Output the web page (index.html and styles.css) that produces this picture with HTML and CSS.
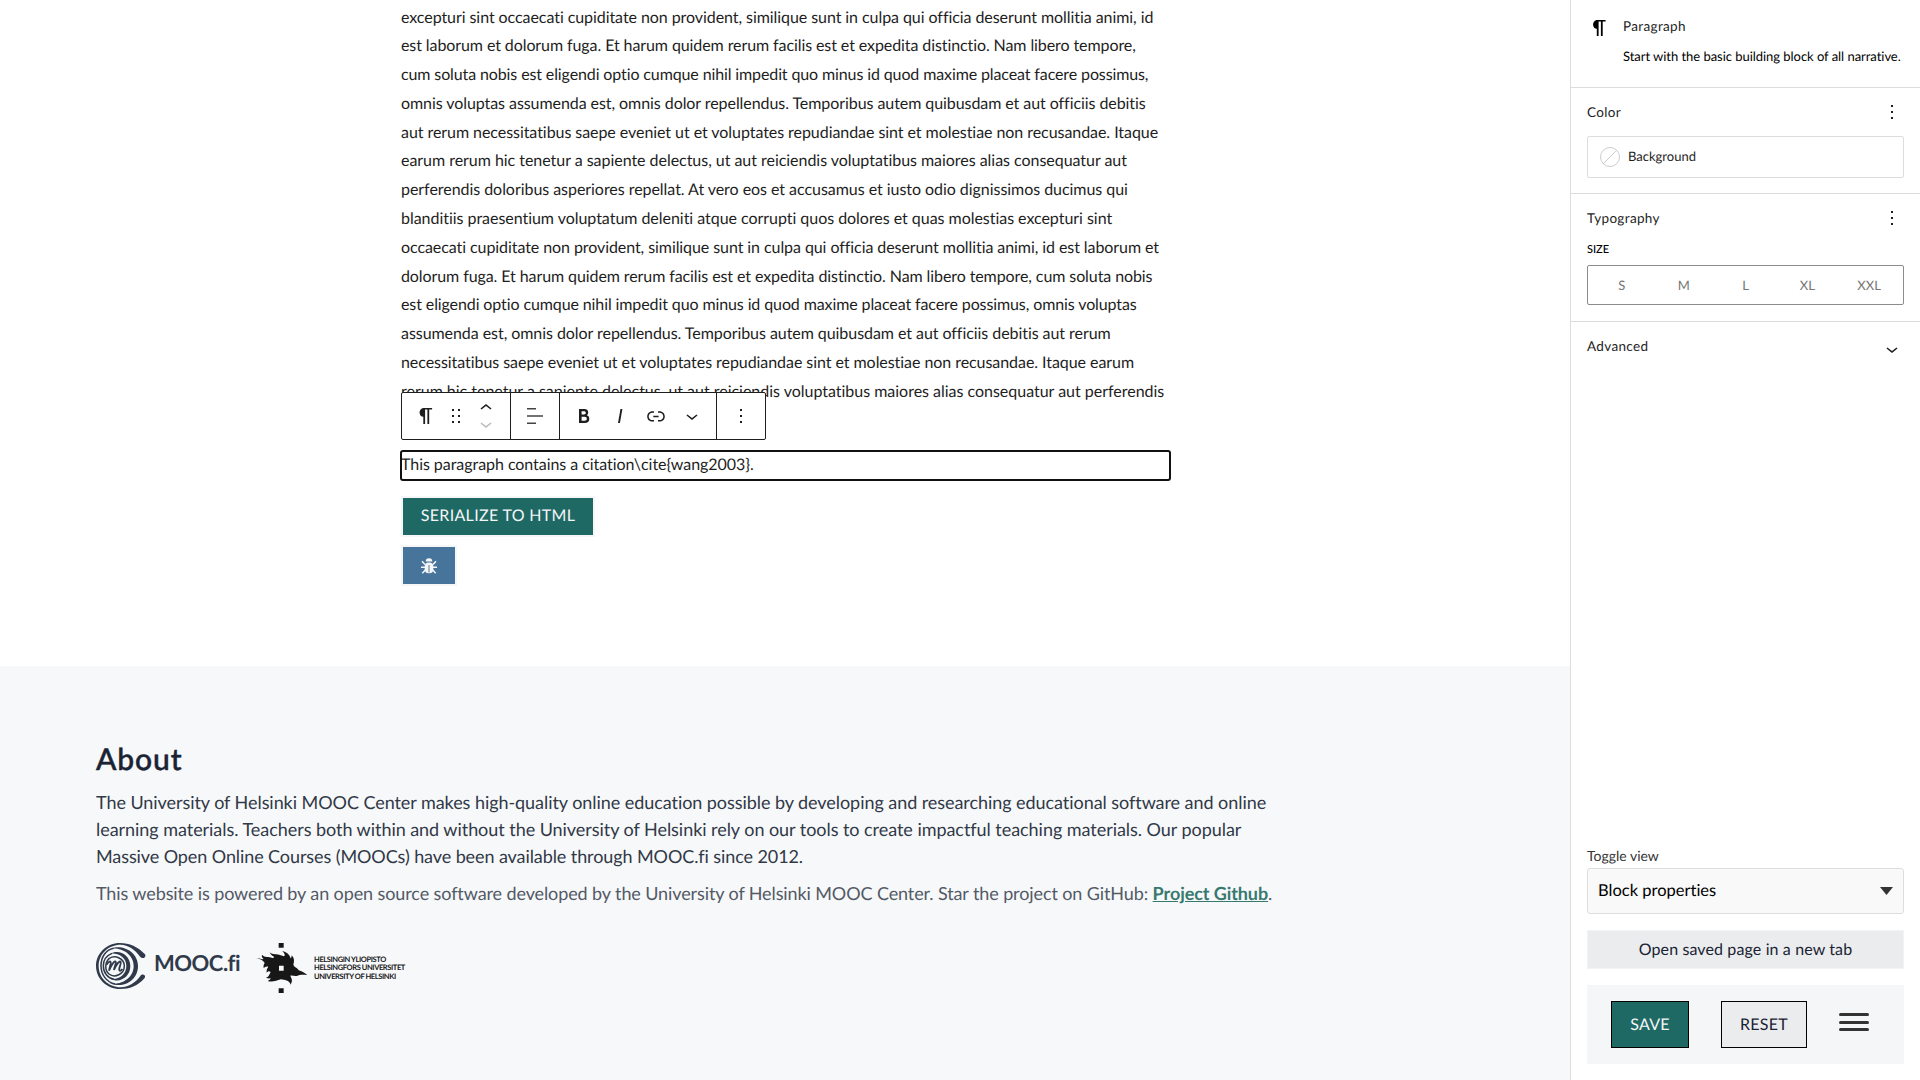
FILE: index.html
```html
<!DOCTYPE html>
<html lang="en">
<head>
<meta charset="utf-8">
<title>Page editor</title>
<link rel="stylesheet" href="styles.css">
</head>
<body>
<div class="app">
  <div class="main">
    <main class="editor">
      <p class="paragraph">
        <span class="t65">excepturi sint occaecati cupiditate non provident, similique sunt in culpa qui officia deserunt mollitia animi, id</span><br>
        <span class="t90">est laborum et dolorum fuga. Et harum quidem rerum facilis est et expedita distinctio. Nam libero tempore,</span><br>
        <span class="t115">cum soluta nobis est eligendi optio cumque nihil impedit quo minus id quod maxime placeat facere possimus,</span><br>
        <span class="t65">omnis voluptas assumenda est, omnis dolor repellendus. Temporibus autem quibusdam et aut officiis debitis</span><br>
        <span class="t55">aut rerum necessitatibus saepe eveniet ut et voluptates repudiandae sint et molestiae non recusandae. Itaque</span><br>
        <span class="t35">earum rerum hic tenetur a sapiente delectus, ut aut reiciendis voluptatibus maiores alias consequatur aut</span><br>
        <span class="t45">perferendis doloribus asperiores repellat. At vero eos et accusamus et iusto odio dignissimos ducimus qui</span><br>
        <span class="t35">blanditiis praesentium voluptatum deleniti atque corrupti quos dolores et quas molestias excepturi sint</span><br>
        <span class="t75">occaecati cupiditate non provident, similique sunt in culpa qui officia deserunt mollitia animi, id est laborum et</span><br>
        <span class="t90">dolorum fuga. Et harum quidem rerum facilis est et expedita distinctio. Nam libero tempore, cum soluta nobis</span><br>
        <span class="t105">est eligendi optio cumque nihil impedit quo minus id quod maxime placeat facere possimus, omnis voluptas</span><br>
        <span class="t55">assumenda est, omnis dolor repellendus. Temporibus autem quibusdam et aut officiis debitis aut rerum</span><br>
        <span class="t55">necessitatibus saepe eveniet ut et voluptates repudiandae sint et molestiae non recusandae. Itaque earum</span><br>
        <span class="t20">rerum hic tenetur a sapiente delectus, ut aut reiciendis voluptatibus maiores alias consequatur aut perferendis</span>
      </p>
      <div class="selected">
        <div class="toolbar">
          <div class="group group-block">
            <svg class="ic" viewBox="0 0 24 24"><path d="M5.600 8.700c0 2.300 1.600 4.100 3.700 4.100V20h1.800V5.600h2.300V20h1.800V5.600h2.900V4H9.800C7.400 4 5.600 6.200 5.600 8.700z"/></svg>
            <svg class="ic" viewBox="0 0 24 24"><path d="M8 7h2V5H8v2zm0 6h2v-2H8v2zm0 6h2v-2H8v2zm6-14v2h2V5h-2zm0 8h2v-2h-2v2zm0 6h2v-2h-2v2z"/></svg>
            <div class="movers">
              <svg class="ic" viewBox="0 0 24 24"><path d="M6.500 12.400L12 8l5.500 4.400-.9 1.200L12 10l-4.500 3.600-1-1.200z"/></svg>
              <svg class="ic disabled" viewBox="0 0 24 24"><path d="M17.500 11.600L12 16l-5.500-4.400.9-1.200L12 14l4.500-3.600 1 1.200z"/></svg>
            </div>
          </div>
          <div class="group group-align">
            <svg class="ic soft" viewBox="0 0 24 24"><path d="M4 11.200v1.600h16v-1.600H4zM4 4h9v1.600H4zM4 18.400h9V20H4z"/></svg>
          </div>
          <div class="group group-format">
            <svg class="ic" viewBox="0 0 24 24"><path d="M14.700 11.300c1-.6 1.500-1.600 1.500-3 0-2.300-1.300-3.400-4-3.400H7v14h5.800c1.400 0 2.500-.3 3.300-1 .8-.7 1.200-1.700 1.200-2.900.1-1.900-.8-3.100-2.600-3.700zm-5.100-4h2.300c.6 0 1.100.1 1.400.4.3.3.5.7.5 1.200s-.2 1-.5 1.200c-.3.300-.8.400-1.400.4H9.600V7.300zm4.600 9c-.4.300-1 .4-1.700.4H9.600v-3.900h2.900c.7 0 1.300.2 1.700.5.4.3.6.8.6 1.500s-.2 1.200-.6 1.500z"/></svg>
            <svg class="ic" viewBox="0 0 24 24"><path d="M12.500 5L10 19h1.900l2.500-14z"/></svg>
            <svg class="ic" viewBox="0 0 24 24"><path d="M15.600 7.200H14v1.500h1.600c2 0 3.700 1.700 3.700 3.700s-1.700 3.700-3.700 3.700H14v1.500h1.600c2.800 0 5.200-2.300 5.200-5.200 0-2.900-2.300-5.200-5.200-5.200zM4.700 12.400c0-2 1.700-3.700 3.700-3.700H10V7.200H8.400c-2.900 0-5.200 2.300-5.200 5.200 0 2.900 2.300 5.200 5.200 5.200H10v-1.500H8.400c-2 0-3.700-1.700-3.700-3.700zm4.600.9h5.300v-1.500H9.300v1.500z"/></svg>
            <svg class="ic" viewBox="0 0 24 24"><path d="M17.500 11.600L12 16l-5.500-4.400.9-1.200L12 14l4.500-3.600 1 1.200z"/></svg>
          </div>
          <div class="group group-more">
            <svg class="ic" viewBox="0 0 24 24"><path d="M13 19h-2v-2h2v2zm0-6h-2v-2h2v2zm0-6h-2V5h2v2z"/></svg>
          </div>
        </div>
        <p class="citation">This paragraph contains a citation\cite{wang2003}.</p>
      </div>
      <button class="btn serialize">SERIALIZE TO HTML</button>
      <button class="btn debug" aria-label="Debug">
        <svg class="bug" viewBox="0 0 16 16"><path d="M4.700 3.600a3.300 3.300 0 0 1 6.600 0z"/><rect x="3.700" y="4.600" width="8.600" height="10.600" rx="4"/><path class="legs" d="M1 3.200l3 3.200M15 3.200l-3 3.200M0 9.300h4M16 9.300h-4M1.300 15.200l3-3.200M14.700 15.200l-3-3.200"/><path class="seam" d="M8 7v7.500"/></svg>
      </button>
    </main>
    <footer class="footer">
      <h1 class="about">About</h1>
      <p class="lead"><span class="t55">The University of Helsinki MOOC Center makes high-quality online education possible by developing and researching educational software and online</span><br><span class="t45">learning materials. Teachers both within and without the University of Helsinki rely on our tools to create impactful teaching materials. Our popular</span><br><span class="t90">Massive Open Online Courses (MOOCs) have been available through MOOC.fi since 2012.</span></p>
      <p class="powered">This website is powered by an open source software developed by the University of Helsinki MOOC Center. Star the project on GitHub: <a class="link" href="#">Project Github</a>.</p>
      <div class="logos">
        <svg class="mooc-mark" viewBox="12 15 150 138">
          <path d="M84 15C112 15 138 26 159 49c5 8-7 16-14 8C128 33 108 21 86 20C49 20 20 48 20 84s29 63 66 64c22-1 44-13 59-34c6-9 18-2 13 6C138 144 112 153 84 153C44 153 12 122 12 84S44 15 84 15z"/>
          <path d="M52 33C92 16 138 42 138 84c0 44-45 70-86 51c34 9 73-14 73-51S86 26 52 33z"/>
          <path class="arc" d="M65 31C40 36 27 58 27 84s17 49 42 54"/>
          <path d="M54 47C83 32 115 52 115 84c0 34-33 53-60 38c24 4 48-11 48-38S78 44 54 47z"/>
          <path class="arc" d="M60 46C42 53 34 68 34 84c0 20 13 37 32 40"/>
          <path class="arc" d="M52 61C70 50 97 62 97 84c0 24-29 38-46 24C38 98 38 74 52 61"/>
          <path class="arc em" d="M44 80c5-11 14-13 12-3L51 98c8-18 17-32 20-27s-4 14-5 25c7-17 17-30 20-24s-9 22-3 26c3 1 6-2 8-5"/>
        </svg>
        <span class="mooc-name">MOOC.fi</span>
        <svg class="flame" viewBox="15 15 156 150">
          <path d="M86 15h15v14H86zM86 151h15v14H86z"/>
          <path fill-rule="evenodd" d="M15 60c14 0 20 5 26 3c-6-3-6-8-5-13c8 10 20 4 31 10c3 0 5-1 5-4c-5-2-11-6-13-13c10 9 22 4 33 9c10 4 13 3 12-3c-1-4-5-7-7-10c12 3 22 10 25 22c3-1 3-6 2-9c8 6 10 15 6 28c4 10 14 9 16 17c9 3 18 7 26 14c-13-1-22-2-32 3c-7 1-13-2-19-1c4 10 8 14 1 27c-4-14-19-14-29-16c-14 3-25 10-40 5c6-2 8-5 9-8c-6 1-11 0-14-2c10-3 10-10 14-17c-6-4-8-1-12 2c-1-10 2-13 5-18c-7-2-10 1-14 4c-1-7 0-10 3-15c-5-8-12-13-29-15zM87 83v15h14V83z"/>
        </svg>
        <div class="uni"><span>HELSINGIN YLIOPISTO</span><span>HELSINGFORS UNIVERSITET</span><span>UNIVERSITY OF HELSINKI</span></div>
      </div>
    </footer>
  </div>
  <aside class="sidebar">
    <section class="card">
      <svg class="ic card-ic" viewBox="0 0 24 24"><path d="M6.100 8.700c0 2.300 1.600 4.100 3.700 4.100V20h1.800V5.600h2.300V20h1.800V5.600h2.900V4H10.300C7.900 4 6.100 6.200 6.100 8.700z"/></svg>
      <div class="card-text">
        <h2 class="head">Paragraph</h2>
        <p class="desc">Start with the basic building block of all narrative.</p>
      </div>
    </section>
    <section class="panel panel-color">
      <div class="panel-head"><h2 class="head">Color</h2><svg class="ic" viewBox="0 0 24 24"><path d="M13 19h-2v-2h2v2zm0-6h-2v-2h2v2zm0-6h-2V5h2v2z"/></svg></div>
      <div class="color-row">
        <svg class="swatch" viewBox="0 0 20 20"><circle cx="10" cy="10" r="9.500"/><path d="M3.300 16.700L16.700 3.300"/></svg>
        <span class="color-name">Background</span>
      </div>
    </section>
    <section class="panel panel-type">
      <div class="panel-head"><h2 class="head">Typography</h2><svg class="ic" viewBox="0 0 24 24"><path d="M13 19h-2v-2h2v2zm0-6h-2v-2h2v2zm0-6h-2V5h2v2z"/></svg></div>
      <div class="size-label">SIZE</div>
      <div class="sizes"><span>S</span><span>M</span><span>L</span><span>XL</span><span>XXL</span></div>
    </section>
    <section class="panel panel-adv">
      <div class="panel-head"><h2 class="head">Advanced</h2><svg class="ic adv-ic" viewBox="0 0 24 24"><path d="M17.500 11.600L12 16l-5.500-4.400.9-1.200L12 14l4.500-3.600 1 1.200z"/></svg></div>
    </section>
    <section class="bottom">
      <div class="toggle-label">Toggle view</div>
      <div class="select"><span>Block properties</span><svg class="caret" viewBox="0 0 13 8"><path d="M0 0h13L6.500 8z"/></svg></div>
      <button class="open">Open saved page in a new tab</button>
      <div class="actions">
        <button class="save">SAVE</button>
        <button class="reset">RESET</button>
        <div class="menu"><i></i><i></i><i></i></div>
      </div>
    </section>
  </aside>
</div>
</body>
</html>
```
FILE: styles.css
```css
* { box-sizing: border-box; }
body { margin: 0; font-family: Lato, sans-serif; color: #1e1e1e; background: #fff; text-rendering: geometricPrecision; font-variant-ligatures: none; }
h1, h2, p { margin: 0; }
button { font-family: inherit; border-radius: 0; margin: 0; text-rendering: inherit; font-variant-ligatures: none; }
.app { display: flex; width: 1920px; height: 1080px; overflow: hidden; }
.main { width: 1570px; display: flex; flex-direction: column; }
.editor { height: 666px; padding: 3px 0 0 401px; display: flex; flex-direction: column; align-items: flex-start; }
.paragraph { font-size: 16px; line-height: 28.8px; width: 780px; height: 402px; padding-top: .5px; white-space: nowrap; }

/* Tracking steps, in thousandths of a pixel */
.t20 { letter-spacing: -.015px; }
.t35 { letter-spacing: -.035px; }
.t45 { letter-spacing: -.045px; }
.t55 { letter-spacing: -.057px; }
.t65 { letter-spacing: -.067px; }
.t75 { letter-spacing: -.075px; }
.t90 { letter-spacing: -.09px; }
.t105 { letter-spacing: -.106px; }
.t115 { letter-spacing: -.117px; }

.ic { width: 24px; height: 24px; fill: #1e1e1e; display: block; flex: none; }
.selected { position: relative; margin-top: 46px; width: 769px; }
.toolbar { position: absolute; left: 0; top: -59px; width: 365px; height: 48px; display: flex; background: #fff; border: 1px solid #1e1e1e; border-radius: 2px; }
.group { display: flex; align-items: center; border-right: 1px solid #1e1e1e; height: 46px; }
.group:last-child { border-right: 0; }
.group-block { width: 109px; padding-left: 12px; gap: 6px; }
.movers { display: flex; flex-direction: column; }
.movers .ic { margin: -4px 0; }
.disabled { fill: #bbb; }
.soft { fill: #444; }
.group-align { width: 49px; justify-content: center; }
.group-format { width: 157px; padding-left: 12px; gap: 12px; }
.group-more { width: 48px; justify-content: center; }
.citation { font-size: 16px; line-height: 27.5px; height: 29px; outline: 2px solid #111; outline-offset: -1px; border-radius: 2px; letter-spacing: -.05px; }
.btn { border: 2px solid #f5f6f7; color: #f5f6f8; font-size: 16px; line-height: 20px; padding: 0; }
.serialize { width: 194px; height: 41px; margin-top: 16px; padding-bottom: 1px; background: #1f6964; letter-spacing: .32px; }
.debug { width: 56px; height: 41px; margin-top: 8px; background: #46749b; display: flex; align-items: center; justify-content: center; }
.bug { width: 16px; height: 16px; fill: #f5f6f8; }
.legs { stroke: #f5f6f8; stroke-width: 1.500; fill: none; }
.seam { stroke: #87a5bd; stroke-width: 1.500; }

.footer { flex: 1; background: #f7f8fa; padding: 74px 96px 0; }
.about { font-size: 30px; line-height: 38px; font-weight: 500; color: #1a2333; letter-spacing: .9px; -webkit-text-stroke: .5px #1a2333; }
.lead { font-size: 18px; line-height: 27px; color: #313947; margin-top: 11px; white-space: nowrap; }
.powered { font-size: 18px; line-height: 27px; color: #535a66; margin-top: 10px; white-space: nowrap; letter-spacing: -.105px; }
.link { color: #37796f; font-weight: 700; text-decoration: underline; letter-spacing: -.08px; }
.logos { display: flex; align-items: flex-start; margin-top: 36px; height: 50px; }
.mooc-mark { width: 50px; height: 46px; fill: #303a4b; }
.arc { fill: none; stroke: #303a4b; stroke-width: 4.500; }
.em { stroke-width: 5.500; }
.mooc-name { font-size: 22px; line-height: 26px; font-weight: 700; color: #303a4b; width: 86px; margin: 7px 0 0 8px; white-space: nowrap; letter-spacing: -.5px; }
.flame { width: 52px; height: 50px; margin-left: 15px; fill: #171717; }
.uni { display: flex; flex-direction: column; margin: 13px 0 0 7px; font-size: 7.500px; line-height: 8.400px; font-weight: 700; color: #171717; white-space: nowrap; letter-spacing: -.4px; }

.sidebar { width: 350px; border-left: 1px solid #ddd; display: flex; flex-direction: column; }
.head { font-size: 13.500px; line-height: 20px; font-weight: 400; color: #1e1e1e; letter-spacing: .35px; }
.card { height: 87px; padding: 16px 16px 0; display: flex; }
.card-ic { fill: #000; }
.card-text { margin-left: 12px; }
.desc { font-size: 13px; line-height: 18px; color: #000; margin-top: 11px; white-space: nowrap; letter-spacing: -.04px; }
.panel { border-top: 1px solid #ddd; padding: 12px 16px 0; }
.panel-color { height: 106px; }
.panel-type { height: 128px; }
.panel-head { display: flex; justify-content: space-between; align-items: center; height: 24px; }
.panel-head .head { padding-bottom: 1px; }
.adv-ic { position: relative; top: 3px; }
.color-row { height: 42px; margin-top: 12px; border: 1px solid #ddd; border-radius: 2px; display: flex; align-items: center; padding-left: 12px; gap: 8px; font-size: 13px; }
.color-name { padding-bottom: 2px; }
.swatch { width: 20px; height: 20px; fill: none; stroke: #ccc; }
.size-label { font-size: 11px; line-height: 15px; font-weight: 500; margin-top: 12px; color: #000; }
.sizes { height: 40px; margin-top: 8px; border: 1px solid #8c8c8c; border-radius: 2px; display: grid; grid-template-columns: repeat(5, 1fr); padding: 0 3px; align-items: center; text-align: center; font-size: 13px; color: #757575; }
.bottom { margin-top: auto; padding: 0 16px 16px; }
.toggle-label { font-size: 14px; line-height: 20px; color: #333; }
.select { height: 46px; margin-top: 2px; border: 1px solid #ddd; border-radius: 3px; background: #f9f9f9; color: #000; display: flex; align-items: center; justify-content: space-between; padding: 0 10px; font-size: 16.500px; }
.select span { padding-bottom: 3px; }
.caret { width: 13px; height: 8px; fill: #333; }
.open { display: block; width: 317px; height: 39px; margin-top: 16px; border: 1px solid #f2f3f4; background: #ebecee; color: #1a2333; font-size: 16px; letter-spacing: .12px; padding: 0 0 1px; }
.actions { height: 79px; margin-top: 16px; background: #f5f6f8; display: flex; padding: 16px 0 0 24px; }
.save, .reset { height: 47px; border: 1px solid #000; font-size: 16px; padding: 0 0 1px; letter-spacing: .3px; }
.save { width: 78px; background: #1f6964; color: #f5f6f8; }
.reset { width: 86px; margin-left: 32px; background: #ebecee; color: #1a2333; }
.menu { width: 30px; margin: 12px 0 0 32px; display: flex; flex-direction: column; gap: 4.500px; }
.menu i { height: 3px; border-radius: 2px; background: #333; }
```
